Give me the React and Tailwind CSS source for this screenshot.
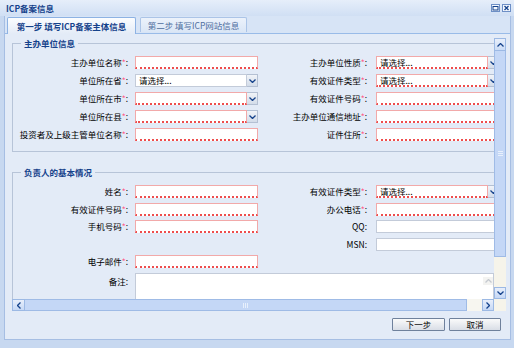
import React from "react";

const cjk = "font-['Noto_Sans_CJK_SC','Liberation_Sans',sans-serif]";

function Chev({ up = false, left = false, right = false, color = "#15428b" }) {
  let d = "M0.5 0.5 L3.5 3.5 L6.5 0.5";
  if (up) d = "M0.5 3.5 L3.5 0.5 L6.5 3.5";
  if (left || right) {
    return (
      <svg width="4" height="7" viewBox="0 0 4 7">
        <path d={left ? "M3.5 0.5 L0.5 3.5 L3.5 6.5" : "M0.5 0.5 L3.5 3.5 L0.5 6.5"} stroke={color} strokeWidth="1.3" fill="none" />
      </svg>
    );
  }
  return (
    <svg width="7" height="4" viewBox="0 0 7 4">
      <path d={d} stroke={color} strokeWidth="1.3" fill="none" />
    </svg>
  );
}

function Label({ text, req, w = "left" }) {
  return (
    <div
      className={
        (w === "left" ? "w-[115px]" : "w-[109px]") +
        " shrink-0 text-right text-[8.5px] leading-[13px] text-black whitespace-nowrap"
      }
    >
      {text}
      {req && <span className="text-[#ff5c8a]">*</span>}:
    </div>
  );
}

function Input({ invalid, value, select, gap = "left" }) {
  return (
    <div className={(gap === "left" ? "ml-[7px]" : "ml-[9px]") + " flex h-[13px] w-[123px] shrink-0"}>
      <div
        className={
          invalid
            ? "flex-1 h-full bg-white border border-[#f2a9a9] border-b-2 border-b-[#ee4d4d] [border-bottom-style:dotted] text-[8.5px] leading-[10px] pl-[3px] text-black"
            : "flex-1 h-full bg-white border border-[#c3cbd9] text-[8.5px] leading-[11px] pl-[3px] text-black"
        }
      >
        {value}
      </div>
      {select && (
        <div className="w-[11px] h-full shrink-0 bg-linear-to-b from-[#f1f4f9] to-[#d3dce9] border border-l-0 border-[#b4c0d3] flex items-center justify-center">
          <Chev />
        </div>
      )}
    </div>
  );
}

function Row({ left, right }) {
  return (
    <div className="flex h-[13px] items-center">
      {left ? (
        <>
          <Label text={left.l} req={left.req} />
          <Input invalid={left.bad} value={left.v} select={left.sel} />
        </>
      ) : (
        <div className="w-[245px] shrink-0" />
      )}
      {right && (
        <>
          <Label text={right.l} req={right.req} w="right" />
          <Input invalid={right.bad} value={right.v} select={right.sel} gap="right" />
        </>
      )}
    </div>
  );
}

const pick = "请选择...";

const unitRows = [
  [{ l: "主办单位名称", req: 1, bad: 1 }, { l: "主办单位性质", req: 1, bad: 1, sel: 1, v: pick }],
  [{ l: "单位所在省", req: 1, sel: 1, v: pick }, { l: "有效证件类型", req: 1, bad: 1, sel: 1, v: pick }],
  [{ l: "单位所在市", req: 1, bad: 1, sel: 1 }, { l: "有效证件号码", req: 1, bad: 1 }],
  [{ l: "单位所在县", req: 1, bad: 1, sel: 1 }, { l: "主办单位通信地址", req: 1, bad: 1 }],
  [{ l: "投资者及上级主管单位名称", req: 1, bad: 1 }, { l: "证件住所", req: 1, bad: 1 }],
];

const personRows = [
  [{ l: "姓名", req: 1, bad: 1 }, { l: "有效证件类型", req: 1, bad: 1, sel: 1, v: pick }],
  [{ l: "有效证件号码", req: 1, bad: 1 }, { l: "办公电话", req: 1, bad: 1 }],
  [{ l: "手机号码", req: 1, bad: 1 }, { l: "QQ" }],
  [null, { l: "MSN" }],
  [{ l: "电子邮件", req: 1, bad: 1 }, null],
];

function Legend({ children }) {
  return (
    <legend className="ml-[8px] px-[3px] text-[8.5px] leading-[10px] font-bold text-[#15428b]">
      {children}
    </legend>
  );
}

export default function App() {
  return (
    <div className={"w-[514px] h-[348px] bg-[#c7d8f0] flex flex-col overflow-hidden " + cjk}>
      {/* title bar */}
      <div className="h-[16px] shrink-0 flex items-center justify-between pl-[6px] pr-[3px] bg-linear-to-b from-[#e6eefa] to-[#d0dff4]">
        <span className="text-[8.5px] leading-none font-bold text-[#15428b]">ICP备案信息</span>
        <div className="flex gap-[2px] items-center">
          <svg width="9" height="8" viewBox="0 0 9 8">
            <rect x="0.5" y="0.5" width="8" height="7" fill="#f4f8fe" stroke="#6d8fc6" />
            <rect x="2" y="2.5" width="5" height="3.5" fill="none" stroke="#15428b" />
          </svg>
          <svg width="9" height="8" viewBox="0 0 9 8">
            <rect x="0.5" y="0.5" width="8" height="7" fill="#f4f8fe" stroke="#6d8fc6" />
            <path d="M2.5 2 L6.5 6 M6.5 2 L2.5 6" stroke="#15428b" strokeWidth="1.3" />
          </svg>
        </div>
      </div>

      {/* window panel */}
      <div className="flex-1 flex flex-col ml-[4px] mr-[3px] mb-[8px] border-x border-b border-[#a6bee3]">
        {/* tabs */}
        <div className="h-[18px] shrink-0 flex items-end pl-[2px] bg-[#d7e4f6] border-b border-[#99bbe8]">
          <div className="-mb-px w-[129px] h-[17px] flex items-center justify-center rounded-t-[2px] border border-b-0 border-[#8db2e3] bg-linear-to-b from-[#fbfdff] to-[#e3ebf7] text-[8.5px] font-bold text-[#15428b] whitespace-nowrap">
            第一步 填写ICP备案主体信息
          </div>
          <div className="ml-[4px] mb-[1px] w-[107px] h-[15px] flex items-center justify-center rounded-t-[2px] border border-b-0 border-[#abc4e7] bg-linear-to-b from-[#ecf2fb] to-[#dae6f6] text-[8.5px] text-[#4f6e9f] whitespace-nowrap">
            第二步 填写ICP网站信息
          </div>
        </div>

        {/* body */}
        <div className="flex-1 flex flex-col bg-[#e3ebf7]">
          <div className="mt-[4px] ml-[7px] w-[494px] h-[273px] flex flex-col">
            <div className="flex h-[261px]">
              {/* scrolled content */}
              <div className="w-[482px] h-full overflow-hidden">
                <div className="w-[520px]">
                  <fieldset className="w-[515px] border border-[#b7c4d8] pt-[8px] pb-[10px]">
                    <Legend>主办单位信息</Legend>
                    <div className="flex flex-col gap-[5px]">
                      {unitRows.map((r, i) => (
                        <Row key={i} left={r[0]} right={r[1]} />
                      ))}
                    </div>
                  </fieldset>
                  <fieldset className="mt-[15px] w-[515px] border border-[#b7c4d8] pt-[8px] pb-[10px]">
                    <Legend>负责人的基本情况</Legend>
                    <div className="flex flex-col gap-[4.5px]">
                      {personRows.map((r, i) => (
                        <Row key={i} left={r[0]} right={r[1]} />
                      ))}
                      <div className="flex">
                        <div className="w-[115px] shrink-0 text-right text-[8.5px] leading-[13px] pt-[2px] text-black">
                          备注:
                        </div>
                        <div className="ml-[7px] w-[359px] h-[46px] shrink-0 flex bg-white border border-[#c3cbd9]">
                          <div className="flex-1" />
                          <div className="w-[10px] flex flex-col pt-[3px]">
                            <div className="h-[8px] bg-[#f3f3f1] flex items-center justify-center">
                              <Chev up color="#c5c9cf" />
                            </div>
                          </div>
                        </div>
                      </div>
                    </div>
                  </fieldset>
                </div>
              </div>

              {/* vertical scrollbar */}
              <div className="w-[12px] h-full flex flex-col">
                <div className="h-[13px] bg-linear-to-b from-[#e8effb] to-[#cbdcf6] border border-[#9cb9e4] flex items-center justify-center">
                  <Chev up />
                </div>
                <div className="h-[206px] bg-[#c4d7f6] border-x border-b border-[#9fbbe6] flex items-center justify-center">
                  <div className="flex flex-col gap-[1px]">
                    <div className="w-[5px] h-px bg-[#e8f0fc]" />
                    <div className="w-[5px] h-px bg-[#e8f0fc]" />
                    <div className="w-[5px] h-px bg-[#e8f0fc]" />
                  </div>
                </div>
                <div className="flex-1 bg-[#f6f4ea]" />
                <div className="h-[12px] bg-linear-to-b from-[#e8effb] to-[#c6d8f5] border border-[#9cb9e4] flex items-center justify-center">
                  <Chev />
                </div>
              </div>
            </div>

            {/* horizontal scrollbar */}
            <div className="flex h-[12px]">
              <div className="w-[13px] bg-linear-to-b from-[#e8effb] to-[#c6d8f5] border border-[#9cb9e4] flex items-center justify-center">
                <Chev left />
              </div>
              <div className="w-[442px] bg-[#c4d7f6] border-y border-r border-[#9fbbe6] flex items-center justify-center">
                <div className="flex gap-[1px]">
                  <div className="w-px h-[5px] bg-[#e8f0fc]" />
                  <div className="w-px h-[5px] bg-[#e8f0fc]" />
                  <div className="w-px h-[5px] bg-[#e8f0fc]" />
                </div>
              </div>
              <div className="w-[15px] bg-[#f7f6f0]" />
              <div className="w-[12px] bg-linear-to-b from-[#e8effb] to-[#c6d8f5] border border-[#9cb9e4] flex items-center justify-center">
                <Chev right />
              </div>
              <div className="w-[12px] bg-[#f6f4ea]" />
            </div>
          </div>

          {/* buttons */}
          <div className="mt-[7px] flex justify-end gap-[4px] pr-[9px]">
            <button className="w-[53px] h-[13px] rounded-[1px] border border-[#6f819c] bg-linear-to-b from-[#fafafa] to-[#d9dee6] text-[8.5px] leading-none text-black">
              下一步
            </button>
            <button className="w-[52px] h-[13px] rounded-[1px] border border-[#6f819c] bg-linear-to-b from-[#fafafa] to-[#d9dee6] text-[8.5px] leading-none text-black">
              取消
            </button>
          </div>
        </div>
      </div>
    </div>
  );
}
